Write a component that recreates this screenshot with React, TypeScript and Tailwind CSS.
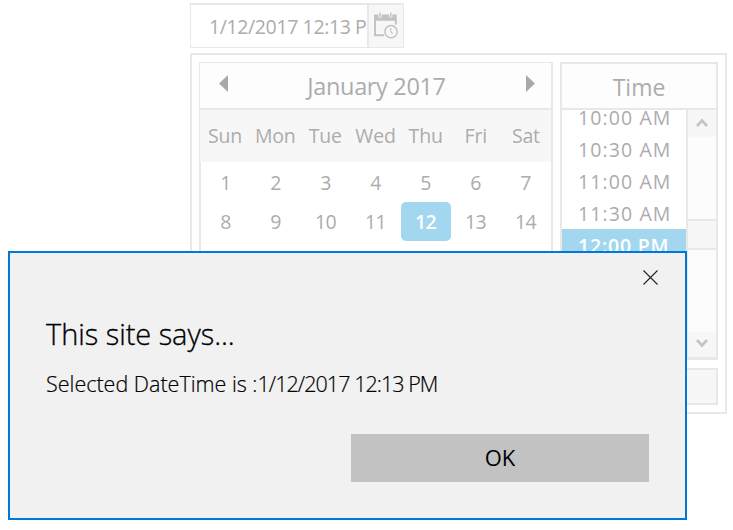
const weekdays = ["Sun", "Mon", "Tue", "Wed", "Thu", "Fri", "Sat"];
const days = Array.from({ length: 14 }, (_, i) => i + 1);
const times = ["10:00 AM", "10:30 AM", "11:00 AM", "11:30 AM", "12:00 PM"];

function DateInput() {
  return (
    <div className="flex h-[45px] w-[214px] border border-t-2 border-[#e8e8e8]">
      <div className="w-[176px] whitespace-nowrap pl-[18px] text-[19.5px] leading-[44px] tracking-[-0.38px]">
        1/12/2017 12:13 P
      </div>
      <div className="flex-1 border-l-2 border-[#e8e8e8] bg-[#f7f7f7]">
        <svg className="ml-[4px] mt-[6px]" width="28" height="28" viewBox="0 0 28 28" fill="none">
          <path d="M1 3.6h4.4v3h3.2v-3h7.5v3h3.2v-3h4.4v6.2H1z" fill="#c2c2c2" />
          <path d="M7 1.5v4.4M17.7 1.5v4.4" stroke="#c2c2c2" strokeWidth="1.5" />
          <path d="M2 8v16.3h9.2M22.8 8v5.5" stroke="#c2c2c2" strokeWidth="1.9" />
          <circle cx="18" cy="20.7" r="6.1" stroke="#c2c2c2" strokeWidth="1.5" />
          <path d="M17.8 17v4l2 1.5" stroke="#c4c4c4" strokeWidth="1.1" />
        </svg>
      </div>
    </div>
  );
}

function Calendar() {
  return (
    <div className="flex h-[298px] w-[354px] flex-col border border-r-2 border-[#e8e8e8]">
      <div className="flex h-[47px] items-start justify-between border-b-2 border-[#e8e8e8] bg-[#fdfdfd] pl-[19px] pr-[16px]">
        <svg className="mt-[12px]" width="9" height="17" viewBox="0 0 9 17" fill="#a9a9a9"><path d="M9 0v17L0 8.5z" /></svg>
        <div className="-ml-px text-[23.5px] leading-[47px] tracking-[-0.35px]">January 2017</div>
        <svg className="mt-[12px]" width="9" height="17" viewBox="0 0 9 17" fill="#a9a9a9"><path d="M0 0v17l9-8.5z" /></svg>
      </div>
      <div className="grid h-[52px] grid-cols-7 bg-[#f7f7f7] text-center text-[19.5px] leading-[52px] tracking-[-0.2px]">
        {weekdays.map((d) => <div key={d}>{d}</div>)}
      </div>
      <div className="grid flex-1 auto-rows-[39px] grid-cols-7 border-l border-[#e8e8e8] pt-px text-center text-[19.5px] leading-[40px] tracking-[-0.6px]">
        {days.map((d) => (
          <div key={d} className={d === 12 ? "h-[39px] rounded-[5px] bg-[#a3d7ef] pr-px font-semibold text-white" : "h-[39px] pr-px"}>{d}</div>
        ))}
      </div>
    </div>
  );
}

function TimeList() {
  return (
    <div className="flex h-[298px] w-[158px] flex-col border-2 border-b-[3px] border-[#e8e8e8]">
      <div className="h-[46px] shrink-0 border-b-2 border-[#e8e8e8] bg-[#fdfdfd] text-center text-[23px] leading-[46px]">Time</div>
      <div className="flex h-[247px]">
        <div className="w-[124px] overflow-hidden">
          <div className="-mt-[9px]">
            {times.map((t) => (
              <div key={t} className={t === "12:00 PM" ? "h-8 whitespace-nowrap bg-[#a3d7ef] pl-4 text-[19.5px] leading-[33px] tracking-[0.8px] font-semibold text-white" : "h-8 whitespace-nowrap pl-4 text-[19.5px] leading-[33px] tracking-[1.1px]"}>{t}</div>
            ))}
          </div>
        </div>
        <div className="flex flex-1 flex-col border-l-2 border-[#e8e8e8] bg-[#fcfcfc]">
          <div className="flex h-[27px] items-center justify-center bg-[#f7f7f7] pb-[2px]">
            <svg width="12" height="10" viewBox="0 0 12 10" fill="none" stroke="#c4c4c4" strokeWidth="2.8"><path d="M1 8l5-5.5L11 8" /></svg>
          </div>
          <div className="mt-[82px] h-[31px] border-y-2 border-[#e8e8e8] bg-[#f7f7f7]" />
          <div className="mt-auto flex h-[25px] items-center justify-center bg-[#f7f7f7] pb-[3px]">
            <svg width="12" height="10" viewBox="0 0 12 10" fill="none" stroke="#c4c4c4" strokeWidth="2.8"><path d="M1 2l5 5.5L11 2" /></svg>
          </div>
        </div>
      </div>
    </div>
  );
}

function AlertDialog() {
  return (
    <div className="absolute left-2 top-[251px] flex h-[269px] w-[679px] flex-col border-2 border-[#0078d7] bg-[#f1f1f1] pl-9 pr-9 text-black">
      <svg className="-mr-[9px] mt-[17px] self-end" width="15" height="15" viewBox="0 0 15 15" stroke="#222" strokeWidth="1.1"><path d="M.5.5l14 14M14.5.5l-14 14" /></svg>
      <h1 className="mt-[29px] w-fit whitespace-nowrap text-[29px] font-light leading-[40px] tracking-[-0.05px] [-webkit-text-stroke:0.3px_black]">This site says...</h1>
      <p className="mt-[14px] w-fit whitespace-nowrap text-[21.5px] font-light leading-[31px] [-webkit-text-stroke:0.2px_black]">
        <span className="tracking-[0px]">Selected DateTime is :</span>
        <span className="tracking-[-0.95px]">1/12/2017 12:13 PM</span>
      </p>
      <button className="mt-[35px] h-12 w-[298px] self-end bg-[#c2c2c2] pb-px text-[22px] leading-[47px]">OK</button>
    </div>
  );
}

export default function App() {
  return (
    <div className="relative h-[530px] w-[733px] overflow-hidden bg-white pl-[190px] pt-[3px] font-['Open_Sans',sans-serif] text-[#acacac]">
      <DateInput />
      <div className="mt-[5px] h-[361px] w-[537px] border-2 border-[#e8e8e8] pl-[7px] pt-[7px]">
        <div className="flex gap-[7px]">
          <Calendar />
          <TimeList />
        </div>
        <div className="mt-2 h-[37px] w-[519px] border-2 border-[#e8e8e8] bg-[#f7f7f7]" />
      </div>
      <AlertDialog />
    </div>
  );
}
